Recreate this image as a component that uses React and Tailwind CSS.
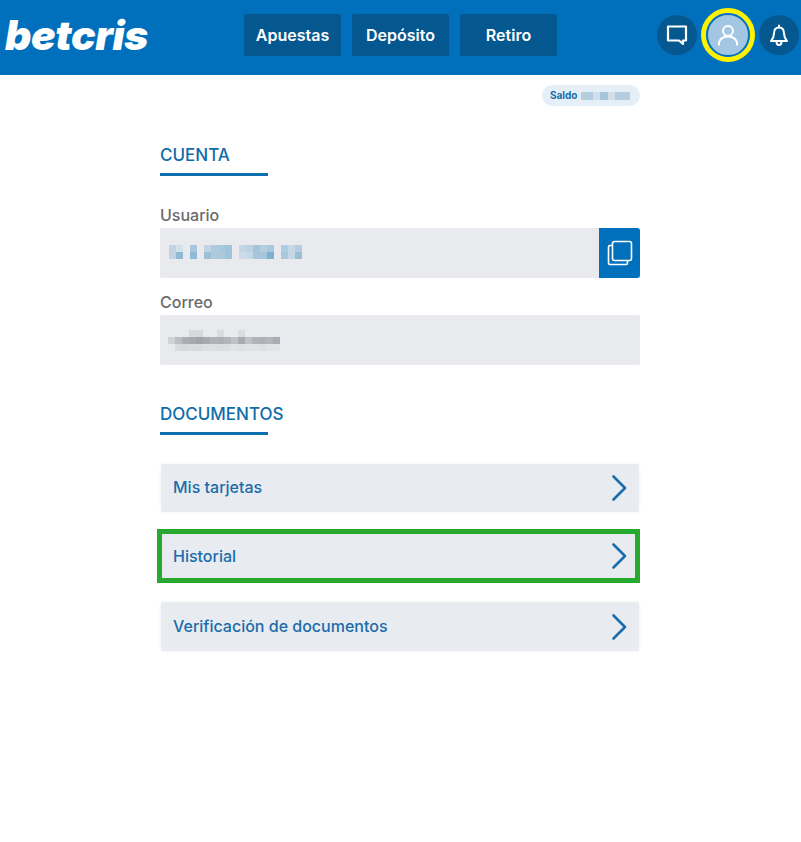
const ff = { fontFamily: 'Inter, "Noto Sans", sans-serif' };

const E = "#e8eaed";
const userCells = [
  ["#c3d3e3","#d3e0ea",E,"#a9c6dd",E,"#c0d4e4","#b0cbdf","#a8c8de","#a0c4dc",E,"#c4d6e4","#bcd2e2","#a4c6dc","#b4cde0","#a9c8de",E,"#b0cce0","#c6d8e5","#b4cde0"],
  ["#c3d3e3","#8fbad6",E,"#8fbad6",E,"#9cc0da","#adc9de","#adc9de","#a0c3db",E,"#ccdbe7","#c6d8e5","#a4c6dc","#a4c6dc","#80b0d0",E,"#a9c8de","#c6d8e6","#98bfd8"],
];
const mailCells = [
  [E,E,E,"#d7d9dd","#d7d9dd",E,E,"#dadce0",E,E,"#dadce0",E,E,E,E,E],
  ["#d0d2d6","#bcbec3","#acaeb4","#a8aab0","#a2a4aa","#a8aab0","#b0b2b8","#aeb0b6","#b4b6bc","#c0c2c6","#a8aab0","#c0c2c6","#b2b4ba","#b0b2b8","#b4b6bc","#aaacb2"],
  [E,"#d8dade","#d6d8dc","#d8dade","#d8dade","#dcdee2","#dcdee2","#dadce0","#dcdee2","#e0e2e5","#dee0e4","#e0e2e5","#dfe1e5","#dde0e3","#e0e2e5","#e2e4e7"],
];

function Mosaic({ rows, size }) {
  return (
    <div className="flex flex-col">
      {rows.map((r, i) => (
        <div key={i} className="flex">
          {r.map((c, j) => (
            <div key={j} style={{ width: size, height: size, backgroundColor: c }} />
          ))}
        </div>
      ))}
    </div>
  );
}

function NavBtn({ children }) {
  return (
    <button className="w-[97px] h-[42px] rounded-[2px] bg-[#05588f] text-white text-[16px] font-semibold flex items-center justify-center" style={ff}>
      {children}
    </button>
  );
}

function Heading({ children }) {
  return (
    <div>
      <h2 className="text-[17px] leading-[22px] font-medium text-[#0f6cab]" style={ff}>{children}</h2>
      <div className="w-[108px] h-[3px] bg-[#0f6fb0] mt-[7px]" />
    </div>
  );
}

function Chevron() {
  return (
    <svg width="18" height="28" viewBox="0 0 18 28" fill="none" stroke="#1a6cab" strokeWidth="2.6" strokeLinecap="round" strokeLinejoin="round">
      <path d="M3.500 2.500L15 14 3.500 25.500" />
    </svg>
  );
}

function Row({ children, className, textClass }) {
  return (
    <div className={"flex items-center justify-between bg-[#e8ebf0] rounded-[2px] text-[16px] font-medium text-[#1a6cab] " + className} style={ff}>
      <span className={textClass}>{children}</span>
      <Chevron />
    </div>
  );
}

export default function App() {
  return (
    <div className="min-h-[842px] bg-white">
      <header className="relative h-[75px] bg-[#0070bd] flex items-center pb-[5px]">
        <div className="absolute left-[5px] top-[9px] text-white text-[41px] leading-[52px] font-black italic tracking-[-0.4px]" style={ff}>betcris</div>
        <nav className="ml-[244px] flex gap-[11px]">
          <NavBtn>Apuestas</NavBtn>
          <NavBtn>Depósito</NavBtn>
          <NavBtn>Retiro</NavBtn>
        </nav>
        <div className="ml-[100px] flex items-center">
          <div className="w-[40px] h-[40px] rounded-full bg-[#05588f] flex items-center justify-center">
            <svg width="22" height="22" viewBox="0 0 22 22" fill="none" stroke="white" strokeWidth="2.200" strokeLinejoin="round">
              <path d="M2 2.500h18v14h-3v3.500l-4-3.500H2z" />
            </svg>
          </div>
          <div className="ml-[4px] w-[54px] h-[54px] rounded-full border-[5px] border-[#fff200] bg-[#a3c6e3] flex items-center justify-center">
            <div className="w-[44px] h-[44px] rounded-full border-[2px] border-[#0070bd] flex items-center justify-center">
              <svg width="22" height="22" viewBox="0 0 24 24" fill="none" stroke="white" strokeWidth="2.200" strokeLinecap="round">
                <circle cx="12" cy="7.500" r="5.400" />
                <path d="M2 22.500c0-5.500 4.500-9 10-9s10 3.500 10 9" />
              </svg>
            </div>
          </div>
          <div className="ml-[4px] w-[40px] h-[40px] rounded-full bg-[#05588f] flex items-center justify-center">
            <svg width="22" height="23" viewBox="0 0 22 23" fill="none" stroke="white" strokeWidth="2" strokeLinejoin="round" strokeLinecap="round">
              <path d="M11 3.500c-3.500 0-5 2.500-5 6 0 3.500-1 5-3 7.500h16c-2-2.500-3-4-3-7.500 0-3.500-1.500-6-5-6z" />
              <path d="M11 1.500v2M8.500 17.500c0 2 1 3.500 2.500 3.500s2.500-1.500 2.500-3.500" />
            </svg>
          </div>
        </div>
      </header>

      <main className="w-[480px] ml-[160px] pt-[10px]">
        <div className="flex justify-end">
          <div className="w-[98px] h-[21px] rounded-full bg-[#e4eff8] flex items-center pl-[8px]">
            <span className="text-[10px] font-bold text-[#1a6cab]" style={ff}>Saldo</span>
            <div className="ml-[3px] flex items-center">
              <div className="w-[12px] h-[8px] bg-[#b5cde0]" />
              <div className="w-[7px] h-[8px] bg-[#d0e0ec]" />
              <div className="w-[8px] h-[8px] bg-[#a9c5da]" />
              <div className="w-[7px] h-[8px] bg-[#d0e0ec]" />
              <div className="w-[15px] h-[8px] bg-[#b5cde0]" />
            </div>
          </div>
        </div>

        <section className="mt-[38px]">
          <Heading>CUENTA</Heading>
          <label className="block mt-[29px] text-[16px] leading-[20px] font-medium text-[#6a6a6a]" style={ff}>Usuario</label>
          <div className="mt-[3px] h-[50px] rounded-[2px] bg-[#e8eaed] flex items-center justify-between pl-[9px]">
            <div className="mb-[2px]"><Mosaic rows={userCells} size={7} /></div>
            <button className="w-[41px] h-[50px] bg-[#0070bd] rounded-r-[3px] flex items-center justify-center">
              <svg width="26" height="26" viewBox="0 0 26 26" fill="none" stroke="white" strokeWidth="1.600" strokeLinejoin="round">
                <rect x="5.500" y="1.500" width="19" height="19" rx="2" />
                <path d="M5.500 5.500H3a1.500 1.500 0 0 0-1.500 1.500v16a1.500 1.500 0 0 0 1.500 1.500h16a1.500 1.500 0 0 0 1.500-1.500v-2.500" />
              </svg>
            </button>
          </div>
          <label className="block mt-[14px] text-[16px] leading-[20px] font-medium text-[#6a6a6a]" style={ff}>Correo</label>
          <div className="mt-[3px] h-[50px] rounded-[2px] bg-[#e8eaed] flex items-center pl-[8px]">
            <Mosaic rows={mailCells} size={7} />
          </div>
        </section>

        <section className="mt-[38px]">
          <Heading>DOCUMENTOS</Heading>
          <div className="mt-[29px] flex flex-col">
            <Row className="mx-[1px] h-[48px] pl-[12px] pr-[11px] shadow-[0_0_4px_rgba(0,0,0,0.05)]" textClass="-mt-[2px]">Mis tarjetas</Row>
            <div className="mt-[17px] -ml-[3px] border-[5px] border-[#27a82e] h-[54px]">
              <Row className="h-full pl-[11px] pr-[7px] rounded-none">Historial</Row>
            </div>
            <Row className="mx-[1px] mt-[19px] h-[49px] pl-[12px] pr-[11px] shadow-[0_0_4px_rgba(0,0,0,0.05)]" textClass="-mt-[2px]">Verificación de documentos</Row>
          </div>
        </section>
      </main>
    </div>
  );
}
